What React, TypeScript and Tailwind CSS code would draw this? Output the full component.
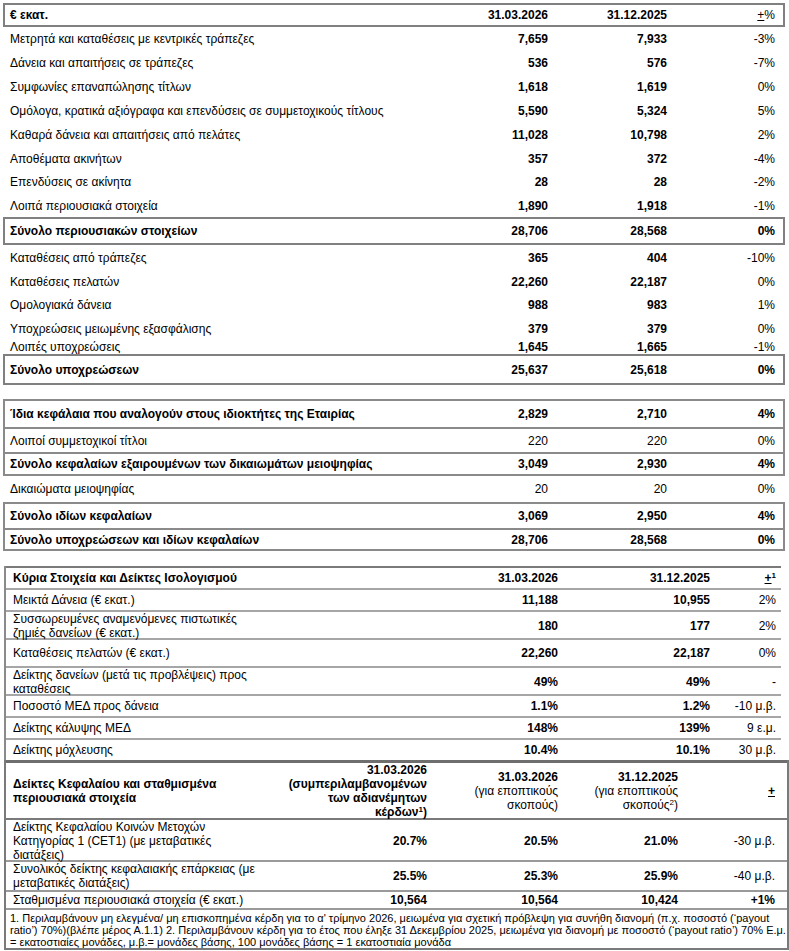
import React from "react";

interface Line {
  label: React.ReactNode;
  a: string;
  b: string;
  c: React.ReactNode;
  row: string;
}

const assets: Line[] = [
  { label: "Μετρητά και καταθέσεις με κεντρικές τράπεζες", a: "7,659", b: "7,933", c: "-3%", row: "h-[24px]" },
  { label: "Δάνεια και απαιτήσεις σε τράπεζες", a: "536", b: "576", c: "-7%", row: "h-[24px]" },
  { label: "Συμφωνίες επαναπώλησης τίτλων", a: "1,618", b: "1,619", c: "0%", row: "h-[24px]" },
  { label: "Ομόλογα, κρατικά αξιόγραφα και επενδύσεις σε συμμετοχικούς τίτλους", a: "5,590", b: "5,324", c: "5%", row: "h-[24px]" },
  { label: "Καθαρά δάνεια και απαιτήσεις από πελάτες", a: "11,028", b: "10,798", c: "2%", row: "h-[24px]" },
  { label: "Αποθέματα ακινήτων", a: "357", b: "372", c: "-4%", row: "h-[23px]" },
  { label: "Επενδύσεις σε ακίνητα", a: "28", b: "28", c: "-2%", row: "h-[24px]" },
  { label: "Λοιπά περιουσιακά στοιχεία", a: "1,890", b: "1,918", c: "-1%", row: "h-[23px]" },
];

const liabilities: Line[] = [
  { label: "Καταθέσεις από τράπεζες", a: "365", b: "404", c: "-10%", row: "h-[25px]" },
  { label: "Καταθέσεις πελατών", a: "22,260", b: "22,187", c: "0%", row: "h-[23px]" },
  { label: "Ομολογιακά δάνεια", a: "988", b: "983", c: "1%", row: "h-[24px]" },
  { label: "Υποχρεώσεις μειωμένης εξασφάλισης", a: "379", b: "379", c: "0%", row: "h-[23px]" },
  { label: "Λοιπές υποχρεώσεις", a: "1,645", b: "1,665", c: "-1%", row: "h-[14px]" },
];

const equity: Line[] = [
  { label: "Ίδια κεφάλαια που αναλογούν στους ιδιοκτήτες της Εταιρίας", a: "2,829", b: "2,710", c: "4%", row: "h-[28px] border-x-2 border-t-2 border-[#8a8a8a] font-bold" },
  { label: "Λοιποί συμμετοχικοί τίτλοι", a: "220", b: "220", c: "0%", row: "h-[25px] border-x-2 border-t-2 border-[#8a8a8a]" },
  { label: "Σύνολο κεφαλαίων εξαιρουμένων των δικαιωμάτων μειοψηφίας", a: "3,049", b: "2,930", c: "4%", row: "h-[24px] border-2 border-[#8a8a8a] font-bold" },
  { label: "Δικαιώματα μειοψηφίας", a: "20", b: "20", c: "0%", row: "h-[26px] border-x-2 border-transparent" },
  { label: "Σύνολο ιδίων κεφαλαίων", a: "3,069", b: "2,950", c: "4%", row: "h-[26px] border-x-2 border-t-2 border-[#8a8a8a] font-bold" },
  { label: "Σύνολο υποχρεώσεων και ιδίων κεφαλαίων", a: "28,706", b: "28,568", c: "0%", row: "h-[23px] border-2 border-[#8a8a8a] font-bold" },
];

const ratios: Line[] = [
  { label: "Μεικτά Δάνεια (€ εκατ.)", a: "11,188", b: "10,955", c: "2%", row: "h-[22px]" },
  { label: <>Συσσωρευμένες αναμενόμενες πιστωτικές<br />ζημιές δανείων (€ εκατ.)</>, a: "180", b: "177", c: "2%", row: "h-[28px]" },
  { label: "Καταθέσεις πελατών (€ εκατ.)", a: "22,260", b: "22,187", c: "0%", row: "h-[28px]" },
  { label: <>Δείκτης δανείων (μετά τις προβλέψεις) προς<br />καταθέσεις</>, a: "49%", b: "49%", c: "-", row: "h-[28px]" },
  { label: "Ποσοστό ΜΕΔ προς δάνεια", a: "1.1%", b: "1.2%", c: "-10 μ.β.", row: "h-[22px]" },
  { label: "Δείκτης κάλυψης ΜΕΔ", a: "148%", b: "139%", c: "9 ε.μ.", row: "h-[22px]" },
  { label: "Δείκτης μόχλευσης", a: "10.4%", b: "10.1%", c: "30 μ.β.", row: "h-[22px]" },
];

function BalanceRow({ line, boldNumbers }: { line: Line; boldNumbers?: boolean }) {
  return (
    <div className={`grid grid-cols-[435px_116px_119px_1fr] items-center ${line.row}`}>
      <div className="pl-[5px] whitespace-nowrap">{line.label}</div>
      <div className={`pr-2 text-right ${boldNumbers ? "font-bold" : ""}`}>{line.a}</div>
      <div className={`pr-2 text-right ${boldNumbers ? "font-bold" : ""}`}>{line.b}</div>
      <div className="pr-2 text-right">{line.c}</div>
    </div>
  );
}

export default function App() {
  return (
    <div className="min-h-screen bg-white font-['Liberation_Sans',Arial,sans-serif] text-[12px] leading-[14px] text-black">
      <div className="pl-[3px] pt-[3px]">
        {/* Ισολογισμός */}
        <div className="w-[782px]">
          <BalanceRow
            line={{
              label: "€ εκατ.",
              a: "31.03.2026",
              b: "31.12.2025",
              c: (
                <span className="font-normal">
                  <span className="underline">+</span>%
                </span>
              ),
              row: "h-[24px] border-2 border-[#808080] font-bold",
            }}
          />
          {assets.map((l, i) => (
            <div key={i} className="border-x-2 border-transparent">
              <BalanceRow line={l} boldNumbers />
            </div>
          ))}
          <BalanceRow line={{ label: "Σύνολο περιουσιακών στοιχείων", a: "28,706", b: "28,568", c: "0%", row: "h-[28px] border-2 border-[#808080] font-bold" }} />
          {liabilities.map((l, i) => (
            <div key={i} className="border-x-2 border-transparent">
              <BalanceRow line={l} boldNumbers />
            </div>
          ))}
          <BalanceRow line={{ label: "Σύνολο υποχρεώσεων", a: "25,637", b: "25,618", c: "0%", row: "h-[31px] border-2 border-[#808080] font-bold" }} />
        </div>

        {/* Ίδια κεφάλαια */}
        <div className="mt-[14px] w-[782px]">
          {equity.map((l, i) => (
            <BalanceRow key={i} line={l} />
          ))}
        </div>

        {/* Κύρια στοιχεία */}
        <div className="ml-[1px] mt-[15px] w-[777px] border-l-2 border-[#8a8a8a]">
          <div className="grid h-[22px] grid-cols-[294px_266px_152px_1fr] items-center border-t-2 border-[#7a7a7a] font-bold">
            <div className="pl-[7px]">Κύρια Στοιχεία και Δείκτες Ισολογισμού</div>
            <div className="pr-2 text-right">31.03.2026</div>
            <div className="pr-2 text-right">31.12.2025</div>
            <div className="pr-[5px] text-right">
              <span className="underline">+</span>
              <sup className="text-[8px]">1</sup>
            </div>
          </div>
          {ratios.map((l, i) => (
            <div key={i} className={`grid grid-cols-[294px_266px_152px_1fr] items-center border-t-2 border-[#a6a6a6] ${l.row}`}>
              <div className="pl-[7px] leading-[14px]">{l.label}</div>
              <div className="pr-2 text-right font-bold">{l.a}</div>
              <div className="pr-2 text-right font-bold">{l.b}</div>
              <div className="pr-[5px] text-right">{l.c}</div>
            </div>
          ))}
        </div>

        {/* Δείκτες κεφαλαίου */}
        <div className="ml-[1px] w-[785px] border-x-2 border-b-2 border-[#7a7a7a]">
          <div className="grid h-[58px] grid-cols-[264px_165px_131px_120px_1fr] items-center border-t-[3px] border-[#6e6e6e] font-bold">
            <div className="pl-[7px]">Δείκτες Κεφαλαίου και σταθμισμένα<br />περιουσιακά στοιχεία</div>
            <div className="pr-2 text-right">31.03.2026<br />(συμπεριλαμβανομένων<br />των αδιανέμητων<br />κέρδων<sup className="text-[8px]">1</sup>)</div>
            <div className="pr-2 text-right font-normal">
              <span className="font-bold">31.03.2026</span><br />(για εποπτικούς<br />σκοπούς)
            </div>
            <div className="pr-2 text-right font-normal">
              <span className="font-bold">31.12.2025</span><br />(για εποπτικούς<br />σκοπούς<sup className="text-[8px]">2</sup>)
            </div>
            <div className="pr-3 text-right"><span className="underline">+</span></div>
          </div>
          <div className="grid h-[42px] grid-cols-[264px_165px_131px_120px_1fr] items-center border-t-2 border-[#7a7a7a]">
            <div className="pl-[7px] leading-[14px]">Δείκτης Κεφαλαίου Κοινών Μετοχών<br />Κατηγορίας 1 (CET1) (με μεταβατικές<br />διατάξεις)</div>
            <div className="pr-2 text-right font-bold">20.7%</div>
            <div className="pr-2 text-right font-bold">20.5%</div>
            <div className="pr-2 text-right font-bold">21.0%</div>
            <div className="pr-3 text-right">-30 μ.β.</div>
          </div>
          <div className="grid h-[30px] grid-cols-[264px_165px_131px_120px_1fr] items-center border-t-2 border-[#9a9a9a]">
            <div className="pl-[7px] leading-[14px]">Συνολικός δείκτης κεφαλαιακής επάρκειας (με<br />μεταβατικές διατάξεις)</div>
            <div className="pr-2 text-right font-bold">25.5%</div>
            <div className="pr-2 text-right font-bold">25.3%</div>
            <div className="pr-2 text-right font-bold">25.9%</div>
            <div className="pr-3 text-right">-40 μ.β.</div>
          </div>
          <div className="grid h-[18px] grid-cols-[264px_165px_131px_120px_1fr] items-center border-t-2 border-[#9a9a9a]">
            <div className="pl-[7px]">Σταθμισμένα περιουσιακά στοιχεία (€ εκατ.)</div>
            <div className="pr-2 text-right font-bold">10,564</div>
            <div className="pr-2 text-right font-bold">10,564</div>
            <div className="pr-2 text-right font-bold">10,424</div>
            <div className="pr-3 text-right font-bold">+1%</div>
          </div>
          <div className="h-[40px] whitespace-nowrap border-t-2 border-[#9a9a9a] pl-[4px] pt-[2px] text-[11px] leading-[12px]">
            1. Περιλαμβάνουν μη ελεγμένα/ μη επισκοπημένα κέρδη για το α' τρίμηνο 2026, μειωμένα για σχετική πρόβλεψη για συνήθη διανομή (π.χ. ποσοστό (‘payout
            <br />
            ratio’) 70%)(βλέπε μέρος Α.1.1) 2. Περιλαμβάνουν κέρδη για το έτος που έληξε 31 Δεκεμβρίου 2025, μειωμένα για διανομή με ποσοστό (‘payout ratio’) 70% Ε.μ.
            <br />
            = εκατοστιαίες μονάδες, μ.β.= μονάδες βάσης, 100 μονάδες βάσης = 1 εκατοστιαία μονάδα
          </div>
        </div>
      </div>
    </div>
  );
}
